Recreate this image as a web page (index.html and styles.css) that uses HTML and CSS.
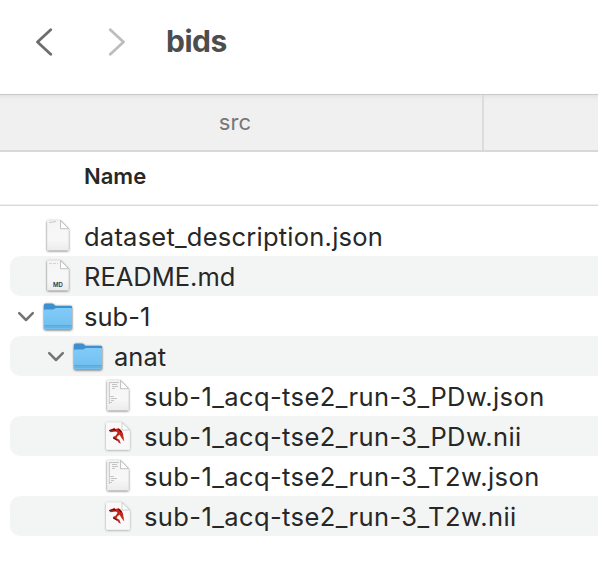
FILE: index.html
```html
<!DOCTYPE html>
<html lang="en">
<head>
<meta charset="utf-8">
<title>bids</title>
<link rel="stylesheet" href="styles.css">
</head>
<body>
<svg class="defs" width="0" height="0" aria-hidden="true">
  <defs>
    <linearGradient id="paper" x1="0" y1="0" x2="0" y2="1"><stop offset="0" stop-color="#f4f4f4"/><stop offset=".6" stop-color="#f8f8f8"/><stop offset="1" stop-color="#ececec"/></linearGradient>
    <linearGradient id="blue" x1="0" y1="0" x2="0" y2="1"><stop offset="0" stop-color="#80cbf8"/><stop offset="1" stop-color="#70bfef"/></linearGradient>
    <filter id="shade" x="-20%" y="-20%" width="140%" height="150%"><feDropShadow dx="0" dy=".7" stdDeviation=".9" flood-color="#000" flood-opacity=".7"/></filter>
    <filter id="soft" x="-20%" y="-20%" width="140%" height="150%"><feDropShadow dx="0" dy=".5" stdDeviation=".8" flood-color="#000" flood-opacity=".4"/></filter>
    <symbol id="page" viewBox="0 0 32 40">
      <path d="M5.2 4.5H18.5L26.6 12.7V34.3H5.2Z" fill="url(#paper)" filter="url(#shade)"/>
      <path d="M18.5 4.5V12.7H26.6Z" fill="#fff" stroke="#aaa" stroke-width=".7"/>
    </symbol>
    <symbol id="folder" viewBox="0 0 32 40">
      <g filter="url(#shade)">
        <path d="M2 9Q2 7.5 3.5 7.5H10Q11 7.5 12 8.5L13.2 9.7H28.6Q30 9.7 30 11V32.1Q30 33.2 28.8 33.2H3.2Q2 33.2 2 32.1Z" fill="#3c8fcd"/>
        <path d="M2 14.6Q2 13.5 3 13.5H11L14 12H29Q30 12 30 13V32.1Q30 33.2 28.8 33.2H3.2Q2 33.2 2 32.1Z" fill="url(#blue)"/>
      </g>
      <path d="M2.3 29.5H29.7M2.3 31H29.7" stroke="#51a2d7" stroke-width=".8"/>
    </symbol>
    <symbol id="json" viewBox="0 0 32 40">
      <use href="#page" width="32" height="40"/>
      <path d="M8 6.5H17M10 8.5H15M10 10.5H16M10 12.5H13M8 20.5H12M9 22.5H15M9 24.5H12M8 26.5H10" stroke="#c4c4c4" stroke-width="1.2"/>
      <path d="M7.3 6V28" stroke="#c4c4c4" stroke-width="1"/>
    </symbol>
    <symbol id="nii" viewBox="0 0 32 40">
      <path d="M4 8Q4 6.6 5.4 6.6H20L27.8 14V32.6Q27.8 33.8 26.5 33.8H5.4Q4 33.8 4 32.6Z" fill="#f9f9f9" filter="url(#soft)"/>
      <path d="M20 6.6V14H27.8Z" fill="#fff" stroke="#bbb" stroke-width=".7"/>
      <path d="M7 14.4L10.5 13L12.2 11.8L13.5 13L16.5 12.2L19 14L21 17.5L22.2 25.5L19.5 22L17.6 18.8L15.3 20.4L14.6 22.2L17.4 23.8L18.8 27.8L16.8 26.8L15.4 24.8L11 22.4L11.2 20.8L13.6 19.8L15.6 16.8L13.8 15.6L8.4 16.2Z" fill="#c7261c"/>
      <path d="M7.3 14.5L11.5 13.4L14 14.3M16.5 12.8L19.6 16.4M11.3 21.7L15.5 24.4" fill="none" stroke="#4d1412" stroke-width="1.1"/>
    </symbol>
    <symbol id="chevron" viewBox="0 0 18 18"><path d="M2.2 6.2L9 13L15.8 6.2" fill="none" stroke="#747474" stroke-width="2.5" stroke-linecap="round" stroke-linejoin="round"/></symbol>
  </defs>
</svg>
<header class="toolbar">
  <svg class="nav" width="18" height="28" viewBox="0 0 18 28"><path d="M15.7 1.8L2.5 14L15.7 26.2" fill="none"/></svg>
  <svg class="nav next" width="18" height="28" viewBox="0 0 18 28"><path d="M2.3 1.8L15.5 14L2.3 26.2" fill="none"/></svg>
  <h1 class="title">bids</h1>
</header>
<nav class="tabs"><div class="tab"><span class="tab-label">src</span></div><div class="tab"></div></nav>
<div class="columns"><span class="column-name">Name</span></div>
<main class="list">
  <div class="row"><span class="toggle"></span><svg class="icon"><use href="#page"/><path d="M7 6.5L14 5.5" stroke="#bbb" stroke-width=".8"/></svg><span class="name dataset">dataset_description.json</span></div>
  <div class="row"><span class="toggle"></span><svg class="icon"><use href="#page"/><path d="M7 7.5H16" stroke="#ccc" stroke-width=".8" stroke-dasharray="3 1"/><text class="md" x="16" y="31" text-anchor="middle">MD</text></svg><span class="name">README.md</span></div>
  <div class="row"><svg class="toggle"><use href="#chevron"/></svg><svg class="icon"><use href="#folder"/></svg><span class="name">sub-1</span></div>
  <div class="row level-1"><svg class="toggle"><use href="#chevron"/></svg><svg class="icon"><use href="#folder"/></svg><span class="name">anat</span></div>
  <div class="row level-2"><span class="toggle"></span><svg class="icon"><use href="#json"/></svg><span class="name scan">sub-1_acq-tse2_run-3_PDw.json</span></div>
  <div class="row level-2"><span class="toggle"></span><svg class="icon"><use href="#nii"/></svg><span class="name scan">sub-1_acq-tse2_run-3_PDw.nii</span></div>
  <div class="row level-2"><span class="toggle"></span><svg class="icon"><use href="#json"/></svg><span class="name scan">sub-1_acq-tse2_run-3_T2w.json</span></div>
  <div class="row level-2"><span class="toggle"></span><svg class="icon"><use href="#nii"/></svg><span class="name scan">sub-1_acq-tse2_run-3_T2w.nii</span></div>
</main>
</body>
</html>
```

FILE: styles.css
```css
* { box-sizing: border-box; }
body { margin: 0; height: 568px; overflow: hidden; background: #fff; color: #272727; font-family: Inter, "Liberation Sans", sans-serif; }
.defs { display: block; height: 0; }
.toolbar { height: 94px; padding: 0 0 11px 35px; display: flex; align-items: center; }
.nav { flex: none; stroke: #6d6d6d; stroke-width: 2.8; stroke-linecap: round; stroke-linejoin: round; }
.next { margin-left: 55px; stroke: #bdbdbd; }
.title { margin: 0 0 2px 40px; font-size: 30px; line-height: 40px; font-weight: 700; color: #4d4d4d; letter-spacing: -.5px; }
.tabs { height: 58px; display: grid; grid-template-columns: 484px 1fr; border-top: 1px solid #c9c9c9; border-bottom: 2px solid #d8d8d8; background: linear-gradient(#e4e4e4, #eee 4px, #f0f0f0 8px); }
.tab { display: flex; align-items: center; justify-content: center; font-size: 22px; color: #777; }
.tab:first-child { padding-right: 12px; border-right: 2px solid #dcdcdc; }
.tab-label { margin-bottom: 2px; letter-spacing: .2px; }
.columns { height: 54px; padding: 0 0 5px 84px; display: flex; align-items: center; border-bottom: 1px solid #d9d9d9; box-shadow: inset 0 -1px #f0f0f0; }
.column-name { font-size: 22px; font-weight: 600; }
.list { padding: 10px 0 0 10px; }
.row { height: 40px; padding-left: 7px; display: flex; align-items: center; border-radius: 10px 0 0 10px; }
.row:nth-child(even) { background: #f3f5f4; }
.level-1 { padding-left: 37px; }
.level-2 { padding-left: 67px; }
.toggle { flex: none; width: 18px; height: 18px; }
.icon { flex: none; width: 32px; height: 40px; margin: 0 10px 0 7px; }
.name { margin-top: 2px; font-size: 25.5px; line-height: 38px; white-space: nowrap; }
.dataset { letter-spacing: .23px; }
.scan { letter-spacing: .4px; }
.md { font-size: 6px; font-weight: 600; fill: #333; }
```
